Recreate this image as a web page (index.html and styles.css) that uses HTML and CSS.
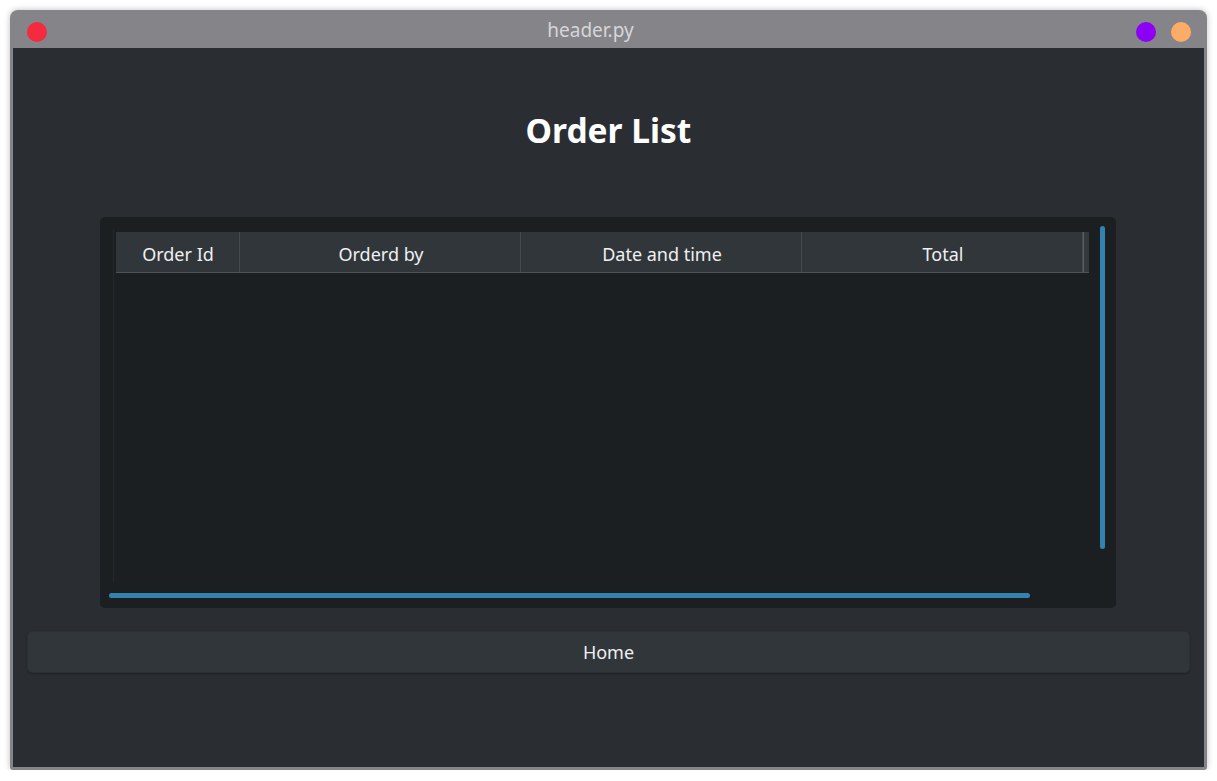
FILE: index.html
```html
<!DOCTYPE html>
<html>
<head>
<meta charset="utf-8">
<link rel="stylesheet" href="styles.css">
</head>
<body>
<div class="window">
  <div class="titlebar">
    <span class="dot red"></span>
    <span class="title">header.py</span>
    <span class="dots-right"><span class="dot purple"></span><span class="dot orange"></span></span>
  </div>
  <div class="content">
    <h1 class="heading">Order List</h1>
    <div class="panel">
      <div class="viewport">
        <div class="thead">
          <div class="th c1">Order Id</div>
          <div class="th c2">Orderd by</div>
          <div class="th c2">Date and time</div>
          <div class="th c2">Total</div>
          <div class="th cx"></div>
        </div>
      </div>
      <div class="vscroll"></div>
      <div class="hscroll"></div>
    </div>
    <button class="btn">Home</button>
  </div>
</div>
</body>
</html>
```
FILE: styles.css
```css
html, body { margin: 0; padding: 0; background: #ffffff; }
body { padding: 10px 0 0 10px; font-family: "Noto Sans", "Open Sans", sans-serif; }
.window {
  width: 1197px;
  height: 760px;
  box-sizing: border-box;
  background: #858489;
  border-radius: 8px 8px 3px 3px;
  box-shadow: 0 0 6px rgba(0,0,0,0.25);
  padding: 0 3px 3px 3px;
  display: flex;
  flex-direction: column;
}
.titlebar {
  height: 38px;
  box-sizing: border-box;
  display: flex;
  align-items: center;
  padding: 6px 13px 0 14px;
}
.title {
  flex: 1;
  text-align: center;
  color: #d6d6d8;
  font-size: 19px;
  margin-top: -4px;
  margin-right: 2px;
}
.dots-right { display: flex; gap: 15px; }
.dot { width: 20px; height: 20px; border-radius: 50%; display: block; }
.red { background: #f42a3f; }
.purple { background: #8c00f5; }
.orange { background: #fcac66; }
.content {
  flex: 1;
  background: #2a2e32;
  display: flex;
  flex-direction: column;
}
.heading {
  margin: 62px 0 0 0;
  height: 40px;
  line-height: 40px;
  text-align: center;
  color: #ffffff;
  font-size: 33.5px;
  font-weight: 700;
}
.panel {
  margin: 67px 88px 0 87px;
  height: 391px;
  background: #1c1f22;
  border-radius: 5px;
  position: relative;
  padding: 12px 0 0 13px;
  box-sizing: border-box;
}
.viewport {
  width: 979px;
  height: 353px;
  box-sizing: border-box;
  border-left: 1px solid #24272b;
  padding: 3px 0 0 2px;
}
.thead {
  display: flex;
  height: 41px;
  width: 973px;
  background: #31363b;
  border-bottom: 1px solid #4e5358;
  box-sizing: border-box;
}
.th {
  color: #eff0f1;
  font-size: 18px;
  display: flex;
  align-items: center;
  justify-content: center;
  box-sizing: border-box;
  padding-top: 3px;
  border-right: 1px solid #464b50;
}
.c1 { width: 124px; padding-left: 1px; }
.c2 { width: 281px; padding-left: 2px; }
.cx { width: 6px; border-right: none; border-left: 1px solid #5a5f64; background: #34393e; }
.vscroll {
  position: absolute;
  left: 1000px;
  top: 9px;
  width: 5px;
  height: 323px;
  border-radius: 3px;
  background: #3283b0;
}
.hscroll {
  position: absolute;
  left: 9px;
  top: 376px;
  width: 921px;
  height: 5px;
  border-radius: 3px;
  background: #3283b0;
}
.btn {
  margin: 23px 14px 0 14px;
  height: 42px;
  background: #31363b;
  border: 1px solid #2c3034;
  border-radius: 5px;
  color: #eff0f1;
  font-family: "Noto Sans", "Open Sans", sans-serif;
  font-size: 18px;
  box-shadow: 0 1px 2px rgba(0,0,0,0.25);
  padding: 0;
}
```
